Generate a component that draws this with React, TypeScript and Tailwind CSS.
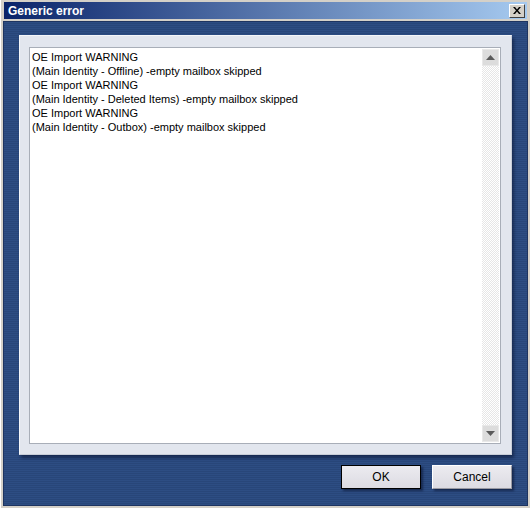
import React from "react";

const lines = [
  "OE Import WARNING",
  "(Main Identity - Offline) -empty mailbox skipped",
  "OE Import WARNING",
  "(Main Identity - Deleted Items) -empty mailbox skipped",
  "OE Import WARNING",
  "(Main Identity - Outbox) -empty mailbox skipped",
];

function Arrow({ up }: { up?: boolean }) {
  return (
    <svg width="9" height="5" viewBox="0 0 9 5">
      {up ? <polygon points="0,5 9,5 4.5,0" fill="#5a5a5a" /> : <polygon points="0,0 9,0 4.5,5" fill="#5a5a5a" />}
    </svg>
  );
}

export default function App() {
  return (
    <div className="w-[530px] h-[508px] bg-[#d4d0c8] flex flex-col pt-[2px] px-[2px] pb-[2px] border-l border-[#ffffff] font-['Liberation_Sans',Arial,sans-serif]">
      {/* title bar */}
      <div className="h-[18px] mx-[1px] flex items-center justify-between pl-[4px] pr-[2px] bg-[linear-gradient(to_right,#0a246a,#a6caf0)]">
        <span className="text-white font-bold text-[12px] leading-none">Generic error</span>
        <div className="w-[16px] h-[14px] bg-[#d4d0c8] border-t border-l border-white border-r border-b border-r-[#404040] border-b-[#404040] flex items-center justify-center">
          <svg width="8" height="7" viewBox="0 0 8 7">
            <path d="M0 0 L2 0 L4 2.5 L6 0 L8 0 L5 3.5 L8 7 L6 7 L4 4.5 L2 7 L0 7 L3 3.5 Z" fill="#000" />
          </svg>
        </div>
      </div>

      {/* body */}
      <div className="flex-1 mt-[2px] bg-[repeating-linear-gradient(to_bottom,#2d4d83_0px,#2d4d83_1px,#284679_1px,#284679_2px)] flex flex-col px-[15px] pt-[13px] pb-[16px] border border-[#1e3460]">
        <div className="h-[420px] bg-[#e2e6ee] border-l border-t border-[#f4f6f9] border-r border-b border-r-[#c8ced8] border-b-[#c8ced8] shadow-[2px_3px_3px_rgba(10,20,50,0.55)] pl-[9px] pr-[10px] pt-[11px] pb-[10px]">
          <div className="h-full bg-white border border-[#a8aeb8] flex">
            <div className="flex-1 pl-[2px] pt-[2px] text-[11px] leading-[14px] text-black">
              {lines.map((l, i) => (
                <div key={i}>{l}</div>
              ))}
            </div>
            <div className="w-[17px] flex flex-col my-[1px] mr-[1px]">
              <div className="h-[17px] bg-[#dcdcdc] flex items-center justify-center border border-[#e8e8e8]">
                <Arrow up />
              </div>
              <div className="flex-1 bg-[repeating-conic-gradient(#e6e6e6_0_25%,#ffffff_0_50%)] bg-[length:2px_2px]" />
              <div className="h-[17px] bg-[#dcdcdc] flex items-center justify-center border border-[#e8e8e8]">
                <Arrow />
              </div>
            </div>
          </div>
        </div>

        <div className="mt-[10px] flex justify-end gap-[11px]">
          <button className="w-[80px] h-[24px] bg-[linear-gradient(to_bottom,#ecebf0,#dcdbe2)] border border-black shadow-[2px_2px_2px_rgba(10,20,50,0.6)] text-[12px] text-black flex items-center justify-center">
            OK
          </button>
          <button className="w-[80px] h-[24px] bg-[linear-gradient(to_bottom,#ecebf0,#dcdbe2)] border-t border-l border-white border-r border-b border-r-[#9a9aa2] border-b-[#9a9aa2] shadow-[2px_2px_2px_rgba(10,20,50,0.6)] text-[12px] text-black flex items-center justify-center">
            Cancel
          </button>
        </div>
      </div>
    </div>
  );
}
